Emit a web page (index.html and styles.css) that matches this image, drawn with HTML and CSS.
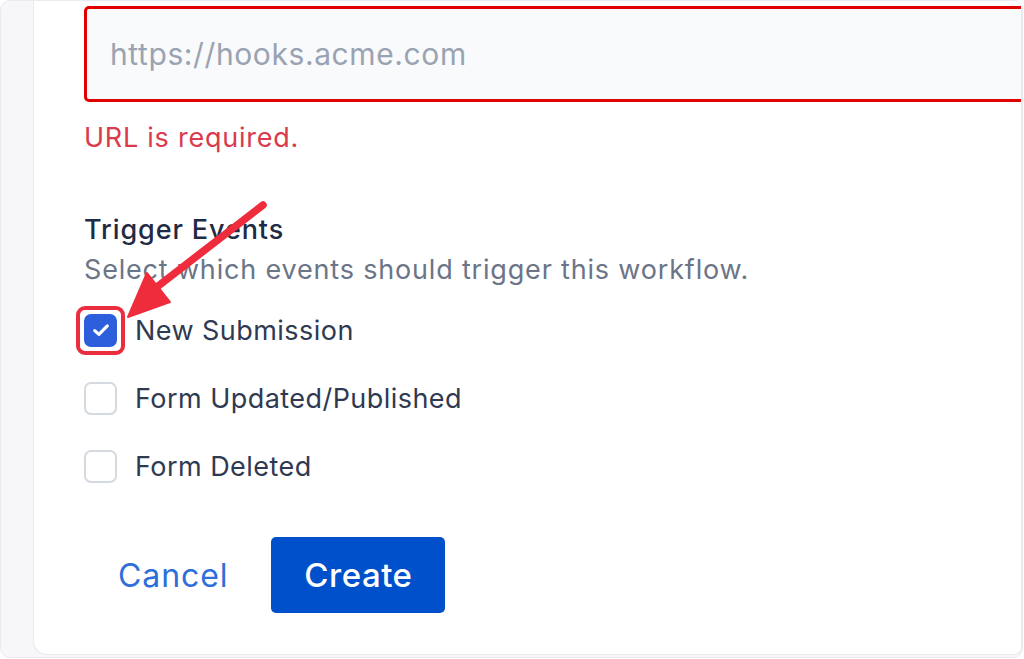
FILE: index.html
```html
<!DOCTYPE html>
<html lang="en">
<head>
<meta charset="utf-8">
<title>Webhook</title>
<link rel="stylesheet" href="styles.css">
</head>
<body>
<div class="frame">
  <div class="card">
    <input class="url-input" type="text" placeholder="https://hooks.acme.com">
    <p class="error">URL is required.</p>
    <div class="field">
      <h3 class="field-title">Trigger Events</h3>
      <p class="field-desc">Select which events should trigger this workflow.</p>
      <ul class="checks">
        <li class="check-row">
          <span class="box box-checked highlight">
            <svg viewBox="0 0 16 16" width="24" height="24"><path d="M3.8 8.4 L6.6 10.9 L12.2 5.2" fill="none" stroke="#fff" stroke-width="2.1" stroke-linecap="round" stroke-linejoin="round"/></svg>
          </span>
          <span class="check-label">New Submission</span>
        </li>
        <li class="check-row">
          <span class="box"></span>
          <span class="check-label">Form Updated/Published</span>
        </li>
        <li class="check-row">
          <span class="box"></span>
          <span class="check-label">Form Deleted</span>
        </li>
      </ul>
    </div>
    <div class="actions">
      <button class="btn btn-link">Cancel</button>
      <button class="btn btn-primary">Create</button>
    </div>
    <svg class="arrow" width="180" height="140" viewBox="0 0 180 140">
      <line x1="162" y1="11" x2="52" y2="96" stroke="#ee2c3c" stroke-width="7.5" stroke-linecap="round"/>
      <polygon points="27,123 46,79 69,108" fill="#ee2c3c" stroke="#ee2c3c" stroke-width="2" stroke-linejoin="round"/>
    </svg>
  </div>
</div>
</body>
</html>
```

FILE: styles.css
```css
* { box-sizing: border-box; }

html, body {
  margin: 0;
  padding: 0;
  background: #ffffff;
  font-family: Inter, "Noto Sans", sans-serif;
}

.frame {
  width: 1023px;
  height: 658px;
  background: #f7f7f9;
  border: 1px solid #ebebef;
  border-radius: 10px;
  padding: 0 0 2px 32px;
  overflow: hidden;
}

.card {
  position: relative;
  height: 100%;
  background: #ffffff;
  border-left: 1px solid #e8e8ed;
  border-bottom: 1px solid #e8e8ed;
  border-right: 1px solid #e8e8ed;
  border-bottom-left-radius: 14px;
  border-bottom-right-radius: 8px;
  padding: 5px 0 0 50px;
  overflow: hidden;
}

.url-input {
  display: block;
  width: 1000px;
  height: 96px;
  border: 3px solid #e00000;
  border-radius: 5px;
  background: #f9fafb;
  padding: 0 0 0 23px;
  font-family: Inter, "Noto Sans", sans-serif;
  font-size: 30px;
  letter-spacing: 0.6px;
  color: #111827;
  outline: none;
}

.url-input::placeholder {
  color: #9aa3b2;
}

.error {
  margin: 18px 0 0;
  font-size: 27px;
  letter-spacing: 0.75px;
  line-height: 36px;
  color: #d93a4c;
}

.field {
  margin-top: 54px;
}

.field-title {
  margin: 0;
  font-size: 27px;
  letter-spacing: 0.9px;
  line-height: 40px;
  font-weight: 500;
  color: #1f2a44;
}

.field-desc {
  margin: 0;
  font-size: 27px;
  letter-spacing: 0.82px;
  line-height: 40px;
  color: #6b7587;
}

.checks {
  list-style: none;
  margin: 6px 0 0;
  padding: 0;
}

.check-row {
  display: flex;
  align-items: center;
  gap: 18px;
  height: 68px;
}

.box {
  position: relative;
  flex: none;
  width: 33px;
  height: 33px;
  border: 2px solid #d5d9e0;
  border-radius: 7px;
  background: #fff;
  display: flex;
  align-items: center;
  justify-content: center;
}

.box-checked {
  background: #2d5fdc;
  border-color: #2d5fdc;
}

.highlight::after {
  content: "";
  position: absolute;
  left: -10px;
  top: -10px;
  right: -10px;
  bottom: -10px;
  border: 4px solid #ea2d3f;
  border-radius: 9px;
}

.check-label {
  font-size: 27px;
  letter-spacing: 0.45px;
  color: #2f3a52;
}

.actions {
  display: flex;
  align-items: center;
  gap: 9px;
  margin-top: 37px;
}

.btn {
  font-family: Inter, "Noto Sans", sans-serif;
  font-size: 32px;
  letter-spacing: 0.9px;
  height: 76px;
  border: none;
  border-radius: 5px;
  cursor: pointer;
}

.btn-link {
  background: transparent;
  color: #2d6ed8;
  padding: 0 34px;
}

.btn-primary {
  background: #0050cc;
  color: #ffffff;
  font-weight: 500;
  font-size: 33px;
  letter-spacing: 0.5px;
  padding: 0 33px;
}

.arrow {
  position: absolute;
  left: 67px;
  top: 193px;
}
```
